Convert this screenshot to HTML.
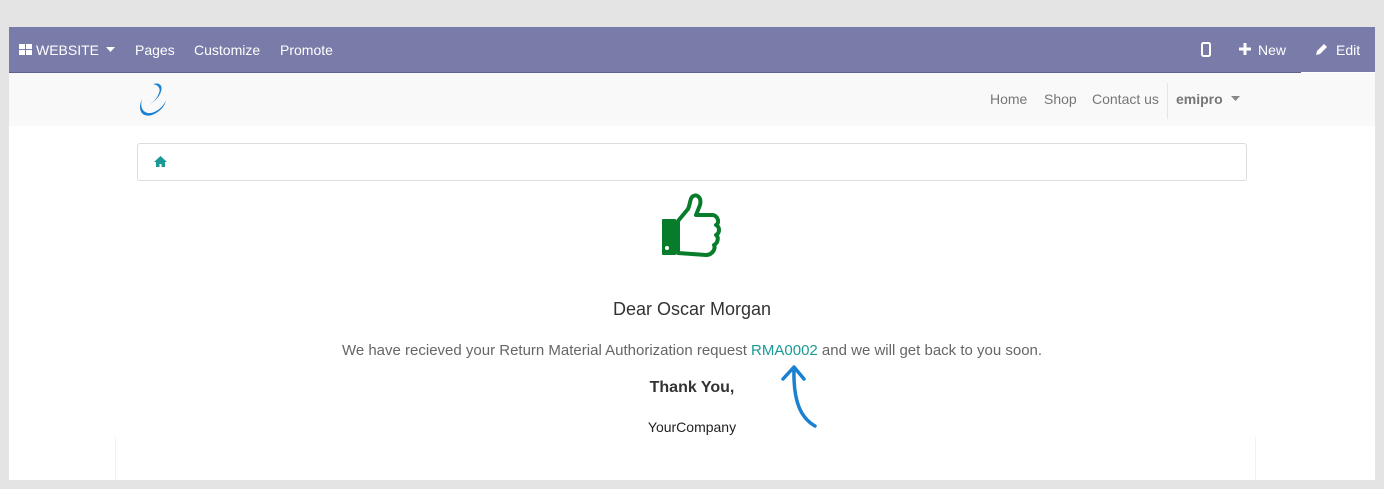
<!DOCTYPE html>
<html><head><style>
body{margin:0;width:1384px;height:489px;background:#e4e4e4;font-family:"Liberation Sans",sans-serif;position:relative;overflow:hidden}
.frame{position:absolute;left:9px;top:27px;width:1366px;height:453px;background:#fff}
.nav{position:absolute;left:0;top:0;width:1366px;height:45px;background:#797ba9;color:#fff;font-size:14px}
.nav span{position:absolute;top:15px}
.navline{position:absolute;left:0;top:45px;width:1292px;height:1px;background:#5f618e}
.hdr{position:absolute;left:0;top:46px;width:1366px;height:53px;background:#f9f9f9}
.hdr span{position:absolute;top:18px;font-size:14px;color:#777}
.bc{position:absolute;left:128px;top:116px;width:1108px;height:36px;border:1px solid #ddd;border-radius:3px}
.c{position:absolute;left:0;width:1366px;text-align:center}
</style></head><body>
<div class="frame">
<div class="nav">
<svg style="position:absolute;left:10px;top:17px" width="13" height="11"><rect x="0" y="0" width="6" height="5" fill="#fff"/><rect x="7" y="0" width="6" height="5" fill="#fff"/><rect x="0" y="6" width="6" height="5" fill="#fff"/><rect x="7" y="6" width="6" height="5" fill="#fff"/></svg>
<span style="left:27px">WEBSITE</span>
<svg style="position:absolute;left:97px;top:20px" width="9" height="5"><path d="M0 0h9L4.5 5z" fill="#fff"/></svg>
<span style="left:126px">Pages</span><span style="left:185px">Customize</span><span style="left:271px">Promote</span>
<svg style="position:absolute;left:1192px;top:15px" width="10" height="15"><rect x="1" y="1" width="8" height="13" rx="1.5" fill="none" stroke="#fff" stroke-width="2"/></svg>
<svg style="position:absolute;left:1230px;top:16px" width="12" height="12"><path d="M6 0v12M0 6h12" stroke="#fff" stroke-width="3"/></svg>
<span style="left:1249px">New</span>
<svg style="position:absolute;left:1306px;top:16px" width="13" height="13"><path d="M1 12l1-4 7-7 3 3-7 7z" fill="#fff"/></svg>
<span style="left:1327px">Edit</span>
</div>
<div class="navline"></div>
<div class="hdr">
<svg style="position:absolute;left:127px;top:7px" width="34" height="40" viewBox="0 0 34 40">
<path d="M17 4C24 2 28 6 24 14 22 18 18 22 12 26 18 22 21 18 23 13 25 8 22 5 17 4z" fill="#1a80d0"/>
<path d="M6 19C1 30 6 38 16 35 24 32 29 26 30 20 27 28 18 34 12 33 6 32 4 26 6 19z" fill="#1a80d0"/>
</svg>
<span style="left:981px">Home</span><span style="left:1035px">Shop</span><span style="left:1083px">Contact us</span>
<div style="position:absolute;left:1158px;top:10px;width:1px;height:36px;background:#e5e5e5"></div>
<span style="left:1167px;font-weight:bold">emipro</span>
<svg style="position:absolute;left:1222px;top:23px" width="9" height="5"><path d="M0 0h9L4.5 5z" fill="#888"/></svg>
</div>
<div class="bc"><svg style="position:absolute;left:16px;top:12px" width="13" height="11"><path d="M6.5 0L0 6h2v5h3.5V8h2v3H11V6h2z" fill="#1a9a95"/></svg></div>
<svg style="position:absolute;left:651px;top:166px" width="64" height="66" viewBox="0 0 64 66"><rect x="2" y="26" width="14" height="36" rx="1" fill="#077d2b"/><circle cx="7" cy="55" r="2" fill="#fff"/><path d="M18 28L28 16C30 12 30 6 32 4 36 0 42 4 40 12L36 22 52 22C58 22 60 30 56 32 60 34 60 40 56 42 59 44 58 50 54 52 56 56 52 62 46 62L18 60z" fill="none" stroke="#077d2b" stroke-width="4" stroke-linejoin="round"/></svg>
<div class="c" style="top:272px;font-size:18px;color:#333">Dear Oscar Morgan</div>
<div class="c" style="top:315px;font-size:15px;color:#666">We have recieved your Return Material Authorization request <span style="color:#1a9a95">RMA0002</span> and we will get back to you soon.</div>
<svg style="position:absolute;left:762px;top:335px" width="50" height="68"><path d="M44 64C30 56 22 40 23 6M12 17L23 5 33 17" fill="none" stroke="#1a80d0" stroke-width="3.5" stroke-linecap="round" stroke-linejoin="round"/></svg>
<div class="c" style="top:352px;font-size:16px;font-weight:bold;color:#333">Thank You,</div>
<div class="c" style="top:392px;font-size:14px;color:#222">YourCompany</div>
<div style="position:absolute;left:106px;top:410px;width:1px;height:43px;background:#f0f0f0"></div>
<div style="position:absolute;left:1246px;top:410px;width:1px;height:43px;background:#f0f0f0"></div>
</div>
</body></html>
